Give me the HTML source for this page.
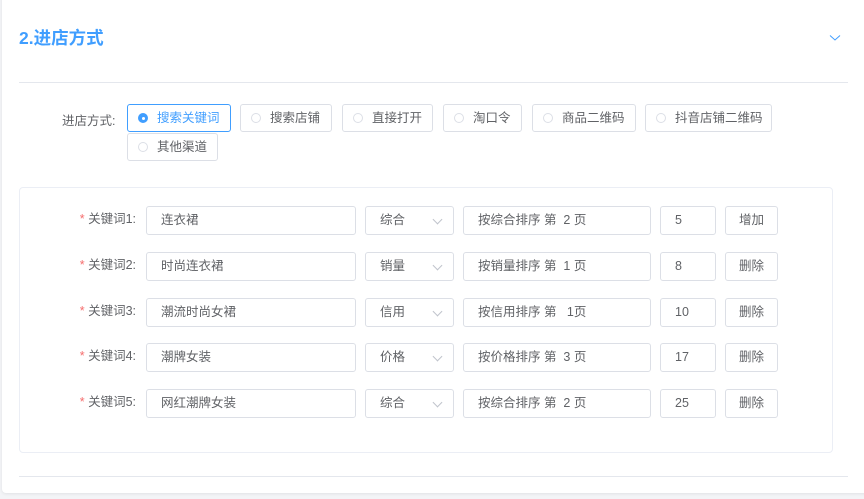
<!DOCTYPE html>
<html><head><meta charset="utf-8"><style>
*{box-sizing:border-box;margin:0;padding:0}
body{width:864px;height:499px;background:#f3f4f7;font-family:"Liberation Sans","Noto Sans CJK SC",sans-serif;position:relative;overflow:hidden;color:#606266;font-size:13px}
.card{position:absolute;left:2px;top:-6px;width:870px;height:499px;background:#fff;border-radius:4px;box-shadow:0 1px 3px rgba(0,0,0,.08)}
.a{position:absolute}
.title{left:19px;top:25px;font-size:17.5px;font-weight:bold;color:#409eff}
.hr{height:1px;background:#e4e7ed}
.rb{position:absolute;height:28px;border:1px solid #dcdfe6;border-radius:3px;line-height:26px;padding-left:29px;font-size:12.5px;color:#606266}
.rb::before{content:"";position:absolute;left:10px;top:8px;width:10px;height:10px;border:1px solid #dcdfe6;border-radius:50%;box-sizing:border-box}
.rb.on{border-color:#409eff;color:#409eff}
.rb.on::before{background:#409eff;border-color:#409eff}
.rb.on::after{content:"";position:absolute;left:13.5px;top:11.5px;width:3px;height:3px;background:#fff;border-radius:50%}
.box{left:19px;top:187px;width:814px;height:266px;border:1px solid #ebeef5;border-radius:4px}
.in{position:absolute;height:29px;border:1px solid #dcdfe6;border-radius:3px;line-height:27px;padding-left:14px;font-size:12.5px;color:#606266}
.lab{position:absolute;width:136px;text-align:right;font-size:12.5px;line-height:27px}
.lab span{color:#f56c6c}
.sel::after{content:"";position:absolute;right:12px;top:9px;width:6px;height:6px;border-right:1px solid #c0c4cc;border-bottom:1px solid #c0c4cc;transform:rotate(45deg)}
.btn{text-align:center;padding:0}
</style></head><body>
<div class="card"></div>
<div class="a title">2.进店方式</div>
<svg class="a" style="left:829px;top:34px" width="12" height="8"><path d="M1 1.5 L6 6 L11 1.5" fill="none" stroke="#409eff" stroke-width="1"/></svg>
<div class="a hr" style="left:19px;top:82px;width:829px"></div>
<div class="a" style="left:62px;top:110px;font-size:12.5px">进店方式:</div>
<div class="rb on" style="left:127px;top:104px;width:104px">搜索关键词</div>
<div class="rb" style="left:240px;top:104px;width:92px">搜索店铺</div>
<div class="rb" style="left:342px;top:104px;width:91px">直接打开</div>
<div class="rb" style="left:443px;top:104px;width:79px">淘口令</div>
<div class="rb" style="left:532px;top:104px;width:104px">商品二维码</div>
<div class="rb" style="left:645px;top:104px;width:127px">抖音店铺二维码</div>
<div class="rb" style="left:127px;top:133px;width:91px">其他渠道</div>
<div class="a box"></div>

<div class="lab" style="left:0;top:206px"><span>*</span> 关键词1:</div>
<div class="in" style="left:146px;top:206px;width:210px">连衣裙</div>
<div class="in sel" style="left:365px;top:206px;width:89px">综合</div>
<div class="in" style="left:463px;top:206px;width:188px">按综合排序 第 &nbsp;2 页</div>
<div class="in" style="left:660px;top:206px;width:56px">5</div>
<div class="in btn" style="left:725px;top:206px;width:53px">增加</div>

<div class="lab" style="left:0;top:252px"><span>*</span> 关键词2:</div>
<div class="in" style="left:146px;top:252px;width:210px">时尚连衣裙</div>
<div class="in sel" style="left:365px;top:252px;width:89px">销量</div>
<div class="in" style="left:463px;top:252px;width:188px">按销量排序 第 &nbsp;1 页</div>
<div class="in" style="left:660px;top:252px;width:56px">8</div>
<div class="in btn" style="left:725px;top:252px;width:53px">删除</div>

<div class="lab" style="left:0;top:298px"><span>*</span> 关键词3:</div>
<div class="in" style="left:146px;top:298px;width:210px">潮流时尚女裙</div>
<div class="in sel" style="left:365px;top:298px;width:89px">信用</div>
<div class="in" style="left:463px;top:298px;width:188px">按信用排序 第 &nbsp;&nbsp;1页</div>
<div class="in" style="left:660px;top:298px;width:56px">10</div>
<div class="in btn" style="left:725px;top:298px;width:53px">删除</div>

<div class="lab" style="left:0;top:343px"><span>*</span> 关键词4:</div>
<div class="in" style="left:146px;top:343px;width:210px">潮牌女装</div>
<div class="in sel" style="left:365px;top:343px;width:89px">价格</div>
<div class="in" style="left:463px;top:343px;width:188px">按价格排序 第 &nbsp;3 页</div>
<div class="in" style="left:660px;top:343px;width:56px">17</div>
<div class="in btn" style="left:725px;top:343px;width:53px">删除</div>

<div class="lab" style="left:0;top:389px"><span>*</span> 关键词5:</div>
<div class="in" style="left:146px;top:389px;width:210px">网红潮牌女装</div>
<div class="in sel" style="left:365px;top:389px;width:89px">综合</div>
<div class="in" style="left:463px;top:389px;width:188px">按综合排序 第 &nbsp;2 页</div>
<div class="in" style="left:660px;top:389px;width:56px">25</div>
<div class="in btn" style="left:725px;top:389px;width:53px">删除</div>

<div class="a hr" style="left:19px;top:476px;width:829px"></div>
</body></html>
